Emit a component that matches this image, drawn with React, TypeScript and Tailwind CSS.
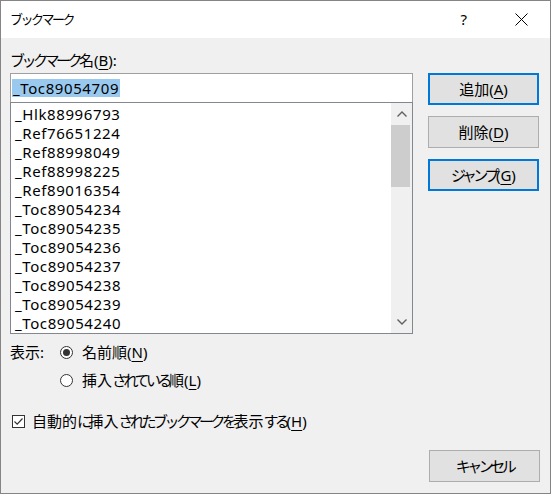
const jp = "font-['Noto_Sans','Noto_Sans_CJK_JP',sans-serif]"

const items = [
  '_Hlk88996793',
  '_Ref76651224',
  '_Ref88998049',
  '_Ref88998225',
  '_Ref89016354',
  '_Toc89054234',
  '_Toc89054235',
  '_Toc89054236',
  '_Toc89054237',
  '_Toc89054238',
  '_Toc89054239',
  '_Toc89054240',
]

// kana in the Windows UI font are narrower than kanji, so tighten kana runs only
function J({ t, small }: { t: string; small?: boolean }) {
  const runs = t.match(/[\u3040-\u30ff]+|[^\u3040-\u30ff]+/g) || []
  return (
    <>
      {runs.map((r, i) =>
        /[\u3040-\u30ff]/.test(r) ? (
          <span key={i} className={small ? 'tracking-[-2.5px]' : 'tracking-[-3.5px]'}>
            {r}
          </span>
        ) : (
          <span key={i}>{r}</span>
        )
      )}
    </>
  )
}

function Key({ k }: { k: string }) {
  return (
    <>
      (<span className="underline underline-offset-[3px] decoration-[1px]">{k}</span>)
    </>
  )
}

function Btn({ label, k, focused }: { label: string; k?: string; focused?: boolean }) {
  return (
    <button
      className={
        'flex h-[32px] w-[111px] items-center justify-center bg-[#e1e1e1] text-[15px] text-black ' +
        (focused ? 'border-2 border-[#0078d7]' : 'border border-[#adadad]')
      }
    >
      <J t={label} />
      {k && <Key k={k} />}
    </button>
  )
}

function Radio({ checked }: { checked?: boolean }) {
  return (
    <span className="flex h-[13px] w-[13px] items-center justify-center rounded-full border border-[#333333] bg-white">
      {checked && <span className="h-[7px] w-[7px] rounded-full bg-[#333333]" />}
    </span>
  )
}

export default function App() {
  return (
    <div className={'flex h-[494px] w-[551px] flex-col border border-[#858585] bg-[#f0f0f0] text-black ' + jp}>
      {/* title bar */}
      <div className="flex h-[37px] items-center bg-white">
        <div className="ml-[9px] text-[13px] leading-none">
          <J t="ブックマーク" small />
        </div>
        <div className="ml-auto mr-[48px] text-[15px] leading-none">?</div>
        <svg width="13" height="13" viewBox="0 0 13 13" className="mr-[22px]">
          <path d="M0.5 0.5 L12.5 12.5 M12.5 0.5 L0.5 12.5" stroke="#000" strokeWidth="1" />
        </svg>
      </div>

      <div className="flex flex-col px-[9px]">
        <div className="flex">
          {/* left column */}
          <div className="flex w-[403px] flex-col pt-[12px]">
            <div className="h-[20px] text-[15px] leading-[20px]">
              <J t="ブックマーク名" />
              <Key k="B" />:
            </div>
            <div className="mt-[3px] h-[29px] border border-b-0 border-[#a0a0a0] bg-white pl-[1px] pt-[2px]">
              <span className="inline-block h-[18px] bg-[#99c9ef] px-[1px] font-['Noto_Sans',sans-serif] text-[15px] leading-[18px] tracking-[0.6px]">
                _Toc89054709
              </span>
            </div>
            <div className="flex h-[232px] border border-[#828790] bg-white">
              <div className="flex flex-1 flex-col pl-[4px] pt-[2px] font-['Noto_Sans',sans-serif] text-[15px] tracking-[0.6px]">
                {items.map(it => (
                  <div key={it} className="h-[19px] leading-[19px]">
                    {it}
                  </div>
                ))}
              </div>
              <div className="flex w-[21px] flex-col bg-[#f0f0f0]">
                <div className="flex h-[22px] items-center justify-center">
                  <svg width="10" height="6" viewBox="0 0 10 6">
                    <path d="M0.5 5.5 L5 1 L9.5 5.5" fill="none" stroke="#606060" strokeWidth="1.4" />
                  </svg>
                </div>
                <div className="mr-[2px] h-[62px] bg-[#cdcdcd]" />
                <div className="flex-1" />
                <div className="flex h-[22px] items-center justify-center">
                  <svg width="10" height="6" viewBox="0 0 10 6">
                    <path d="M0.5 0.5 L5 5 L9.5 0.5" fill="none" stroke="#606060" strokeWidth="1.4" />
                  </svg>
                </div>
              </div>
            </div>
          </div>

          {/* right column */}
          <div className="ml-[15px] flex flex-col gap-[11px] pt-[35px]">
            <Btn label="追加" k="A" focused />
            <Btn label="削除" k="D" />
            <Btn label="ジャンプ" k="G" focused />
          </div>
        </div>

        {/* display order */}
        <div className="mt-[8px] flex h-[20px] items-center text-[15px]">
          <span className="w-[50px]">表示:</span>
          <Radio checked />
          <span className="ml-[9px]">
            <J t="名前順" />
            <Key k="N" />
          </span>
        </div>
        <div className="mt-[8px] flex h-[20px] items-center pl-[50px] text-[15px]">
          <Radio />
          <span className="ml-[9px]">
            <J t="挿入されている順" />
            <Key k="L" />
          </span>
        </div>

        <div className="mt-[21px] flex h-[20px] items-center text-[15px]">
          <span className="ml-[2px] flex h-[13px] w-[13px] items-center justify-center border border-[#333333] bg-white">
            <svg width="11" height="11" viewBox="0 0 11 11">
              <path d="M1.5 5.5 L4.2 8.2 L9.5 2.5" fill="none" stroke="#333333" strokeWidth="1.2" />
            </svg>
          </span>
          <span className="ml-[7px]">
            <J t="自動的に挿入されたブックマークを表示する" />
            <Key k="H" />
          </span>
        </div>

        <div className="mt-[19px] flex justify-end pr-[1px]">
          <Btn label="キャンセル" />
        </div>
      </div>
    </div>
  )
}
